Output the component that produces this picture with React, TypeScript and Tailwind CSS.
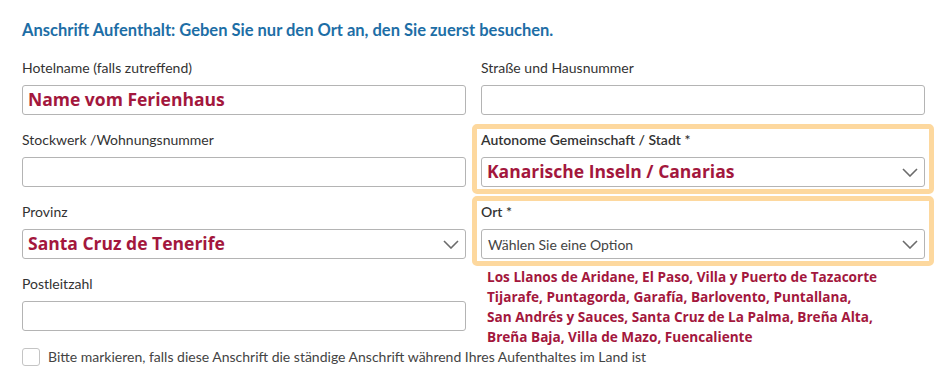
import React from "react";

const labelCls = "block text-[14px] leading-[18px] text-[#333] mb-[8px]";
const boxCls =
  "block w-full h-[30px] rounded-[3px] border border-[#b4b4b4] bg-white px-[5px]";

const Chevron = () => (
  <svg width="16" height="9" viewBox="0 0 16 9" className="shrink-0">
    <polyline
      points="1,1 8,8 15,1"
      fill="none"
      stroke="#6b6b6b"
      strokeWidth="1.6"
    />
  </svg>
);

const Field = ({
  label,
  value,
  bold,
}: {
  label: string;
  value?: string;
  bold?: boolean;
}) => (
  <div>
    <label className={labelCls + (bold ? " font-semibold" : "")}>{label}</label>
    <div className={boxCls + " flex items-center"}>
      <span className="font-['Open_Sans'] font-bold text-[17.5px] leading-[24px] pb-[3px] text-[#a3173d]">
        {value}
      </span>
    </div>
  </div>
);

const SelectField = ({
  label,
  value,
  placeholder,
  bold,
}: {
  label: string;
  value?: string;
  placeholder?: string;
  bold?: boolean;
}) => (
  <div>
    <label className={labelCls + (bold ? " font-semibold" : "")}>{label}</label>
    <div className={boxCls + " flex items-center justify-between pr-[6px]"}>
      {value ? (
        <span className="font-['Open_Sans'] font-bold text-[17.5px] leading-[24px] pb-[3px] text-[#a3173d]">
          {value}
        </span>
      ) : (
        <span className="text-[14px] text-[#444] pl-[1px]">{placeholder}</span>
      )}
      <Chevron />
    </div>
  </div>
);

const Highlight = ({ children }: { children: React.ReactNode }) => (
  <div className="-mx-[9px] -my-[7px] border-[5px] border-[#fdd89e] rounded-[5px] px-[4px] py-[2px]">
    {children}
  </div>
);

export default function App() {
  return (
    <div className="w-[952px] h-[387px] bg-white font-['Lato'] pl-[22px] pr-[27px] pt-[21px]">
      <h2 className="text-[16.5px] leading-[18px] font-bold text-[#1d6ea6] mb-[20px]">
        Anschrift Aufenthalt: Geben Sie nur den Ort an, den Sie zuerst besuchen.
      </h2>

      <div className="grid grid-cols-2 gap-x-[15px] gap-y-[16px]">
        <Field label="Hotelname (falls zutreffend)" value="Name vom Ferienhaus" />
        <Field label="Straße und Hausnummer" />

        <Field label="Stockwerk /Wohnungsnummer" />
        <Highlight>
          <SelectField
            label="Autonome Gemeinschaft / Stadt *"
            value="Kanarische Inseln / Canarias"
            bold
          />
        </Highlight>

        <SelectField label="Provinz" value="Santa Cruz de Tenerife" />
        <Highlight>
          <SelectField label="Ort *" placeholder="Wählen Sie eine Option" bold />
        </Highlight>

        <Field label="Postleitzahl" />
        <div className="-mt-[8px] pl-[6px] font-['Open_Sans'] font-bold text-[13.6px] leading-[20px] text-[#a3173d]">
          <div>Los Llanos de Aridane, El Paso, Villa y Puerto de Tazacorte</div>
          <div>Tijarafe, Puntagorda, Garafía, Barlovento, Puntallana,</div>
          <div>San Andrés y Sauces, Santa Cruz de La Palma, Breña Alta,</div>
          <div>Breña Baja, Villa de Mazo, Fuencaliente</div>
        </div>
      </div>

      <label className="flex items-center gap-[8px] text-[14px] leading-[20px] text-[#444]">
        <span className="w-[18px] h-[18px] rounded-[3px] border border-[#c4c4c4] bg-white" />
        Bitte markieren, falls diese Anschrift die ständige Anschrift während
        Ihres Aufenthaltes im Land ist
      </label>
    </div>
  );
}
